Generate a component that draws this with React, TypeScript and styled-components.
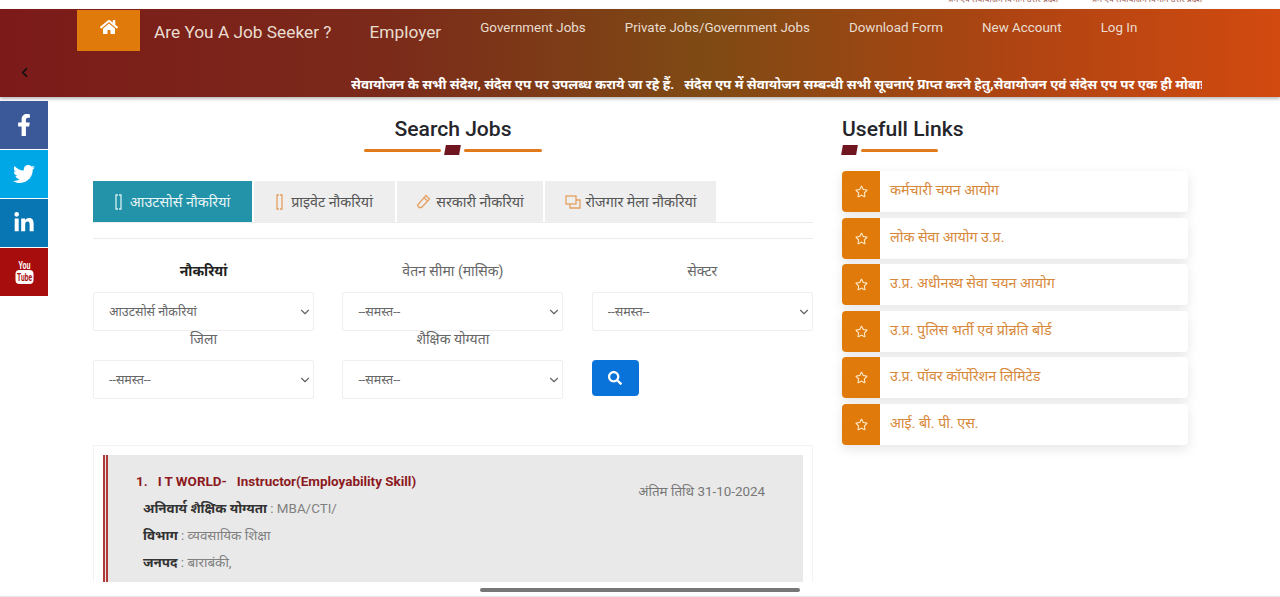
import styled, { createGlobalStyle } from 'styled-components'
import { FaHome, FaFacebookF, FaTwitter, FaLinkedinIn, FaSearch, FaRegStar, FaChevronLeft } from 'react-icons/fa'
import { ChevronDown } from 'lucide-react'

const FONT = `Roboto, "Noto Sans", "Noto Sans Devanagari", "Liberation Sans", sans-serif`

const Global = createGlobalStyle`
  html, body {
    margin: 0;
    height: 597px;
    overflow: hidden;
    background: #fff;
    font-family: ${FONT};
  }
  * { box-sizing: border-box; }
`

const Page = styled.div`
  position: relative;
  height: 597px;
  overflow: hidden;
  border-bottom: 1px solid #e6e6e6;
`

const TopStrip = styled.div`
  height: 9px;
  overflow: hidden;
  display: flex;
  justify-content: flex-end;
  gap: 33px;
  padding-right: 78px;
  font-size: 8.5px;
  line-height: 4px;
  color: #9a5a50;
  span { margin-top: -3px; }
`

const Header = styled.header`
  height: 88px;
  padding-top: 1px;
  background: linear-gradient(90deg, #7c1a1a 0%, #7b2a1a 30%, #7f4a14 55%, #b04412 80%, #d24a10 100%);
  box-shadow: 0 2px 3px rgba(120, 120, 120, 0.5);
`

const Nav = styled.nav`
  display: flex;
  align-items: flex-start;
  padding-left: 77px;
  height: 41px;
  color: #e9ddd0;
`

const HomeTile = styled.a`
  width: 63px;
  height: 41px;
  background: #e07a0b;
  color: #fff;
  display: flex;
  justify-content: center;
  padding-top: 8px;
  font-size: 18px;
`

const BigLink = styled.a<{ $gap: number }>`
  font-size: 17.3px;
  line-height: 24px;
  margin: 10px 0 0 ${p => p.$gap}px;
  white-space: nowrap;
`

const SmallLink = styled.a<{ $gap: number }>`
  font-size: 13.4px;
  line-height: 20px;
  margin: 8px 0 0 ${p => p.$gap}px;
  white-space: nowrap;
`

const TickerRow = styled.div`
  display: flex;
  align-items: center;
  height: 46px;
  padding: 0 78px 0 19px;
`

const Back = styled.span`
  color: #111;
  font-size: 11px;
  display: flex;
  width: 332px;
  flex: none;
  margin-top: -4px;
`

const Ticker = styled.div`
  flex: 1;
  overflow: hidden;
  white-space: pre;
  color: #fff;
  font-size: 13.45px;
  font-weight: 700;
  margin-top: 22px;
  line-height: 20px;
`

const Body = styled.div`
  display: flex;
  align-items: flex-start;
  padding-top: 3px;
`

const Social = styled.aside`
  width: 48px;
  flex: none;
  display: flex;
  flex-direction: column;
  gap: 1px;
  margin-top: 1px;
`

const SocialTile = styled.a<{ $bg: string }>`
  height: 48px;
  background: ${p => p.$bg};
  color: #fff;
  display: flex;
  align-items: center;
  justify-content: center;
  font-size: 22px;
`

const Main = styled.main`
  width: 720px;
  flex: none;
  margin-left: 45px;
  height: 482px;
  overflow: hidden;
`

const Heading = styled.h2<{ $center?: boolean }>`
  margin: 15px 0 0;
  font-size: 21.1px;
  line-height: 28px;
  font-weight: 500;
  color: #25252b;
  text-align: ${p => (p.$center ? 'center' : 'left')};
`

const Divider = styled.div<{ $center?: boolean }>`
  display: flex;
  align-items: center;
  gap: 4px;
  height: 10px;
  margin-top: 2px;
  justify-content: ${p => (p.$center ? 'center' : 'flex-start')};
`

const Rule = styled.i<{ $w: number }>`
  display: block;
  width: ${p => p.$w}px;
  height: 3px;
  background: #e07a1a;
  border-radius: 2px;
`

const Block = styled.i`
  display: block;
  width: 15px;
  height: 10px;
  background: #701620;
  transform: skewX(-10deg);
`

const Tabs = styled.div`
  display: flex;
  gap: 2px;
  margin-top: 26px;
  height: 42px;
  border-bottom: 1px solid #ececec;
`

const Tab = styled.a<{ $w: number; $gap?: number; $active?: boolean }>`
  width: ${p => p.$w}px;
  height: 41px;
  background: ${p => (p.$active ? '#2393a9' : '#eeeeee')};
  color: ${p => (p.$active ? '#e8f4f6' : '#555')};
  display: flex;
  align-items: center;
  justify-content: center;
  gap: ${p => p.$gap ?? 5}px;
  font-size: 14.3px;
  svg { flex: none; }
`

const FormArea = styled.div`
  margin-top: 15px;
  border-top: 1px solid #ececec;
  display: grid;
  grid-template-columns: repeat(3, 221px);
  column-gap: 28.4px;
  padding-top: 24px;
`

const Field = styled.div`
  display: flex;
  flex-direction: column;
  align-items: stretch;
`

const FieldLabel = styled.label<{ $strong?: boolean }>`
  text-align: center;
  font-size: 14px;
  line-height: 16px;
  height: 29px;
  color: ${p => (p.$strong ? '#222' : '#666')};
  font-weight: ${p => (p.$strong ? 700 : 400)};
`

const SelectWrap = styled.div`
  position: relative;
  height: 39px;
  svg {
    position: absolute;
    right: 2px;
    top: 13px;
    color: #666;
    pointer-events: none;
  }
`

const Select = styled.select`
  appearance: none;
  width: 100%;
  height: 39px;
  padding: 0 15px;
  border: 1px solid #efefef;
  border-radius: 2px;
  background: #fff;
  color: #666;
  font-family: ${FONT};
  font-size: 12.5px;
`

const SearchButton = styled.button`
  width: 47px;
  height: 36px;
  margin-top: 29px;
  border: 0;
  border-radius: 4px;
  background: #0a73d9;
  color: #fff;
  font-size: 14px;
  display: flex;
  align-items: center;
  justify-content: center;
`

const JobPanel = styled.section`
  margin-top: 46px;
  padding: 9px;
  border: 1px solid #f3f3f3;
  height: 200px;
`

const JobCard = styled.article`
  display: flex;
  justify-content: space-between;
  height: 190px;
  padding: 17px 38px 0 28px;
  background: #e9e9e9;
  border-left: 5px double #b03a3a;
`

const JobInfo = styled.div`
  color: #808080;
  font-size: 13.4px;
`

const JobTitle = styled.h3`
  margin: 0 0 7px;
  font-size: 13.45px;
  line-height: 20px;
  font-weight: 700;
  color: #8c1a1f;
  white-space: pre;
`

const JobLine = styled.p`
  margin: 0 0 7px 7px;
  line-height: 20px;
  b { color: #333; }
`

const DateColumn = styled.div`
  display: flex;
  flex-direction: column;
  align-items: flex-end;
  margin-top: 10px;
  font-size: 13.4px;
  line-height: 20px;
  color: #777;
`

const DetailLink = styled.a`
  margin-top: 78px;
`

const Side = styled.aside`
  width: 346px;
  flex: none;
  margin-left: 29px;
`

const LinkList = styled.div`
  margin-top: 16px;
  display: flex;
  flex-direction: column;
  gap: 5.6px;
`

const LinkRow = styled.a`
  display: flex;
  align-items: stretch;
  height: 41px;
  background: #fff;
  border-radius: 4px;
  box-shadow: 0 4px 12px rgba(0, 0, 0, 0.1);
  overflow: hidden;
  color: #d8883a;
  font-size: 14.3px;
`

const StarTile = styled.span`
  width: 38px;
  flex: none;
  background: #e07a0b;
  color: #ffe9c9;
  display: flex;
  align-items: center;
  justify-content: center;
  font-size: 13px;
  margin-right: 10px;
`

const LinkText = styled.span`
  line-height: 38px;
`

const ScrollThumb = styled.div`
  position: absolute;
  left: 480px;
  top: 588px;
  width: 320px;
  height: 4px;
  border-radius: 2px;
  background: #777;
`

const Bracket = ({ color }: { color: string }) => (
  <svg width="7" height="16" viewBox="0 0 7 16" fill="none" stroke={color} strokeWidth="1.3">
    <path d="M3 1H1v14h2M4 1h2v14H4" />
  </svg>
)

const Eraser = () => (
  <svg width="15" height="15" viewBox="0 0 15 15" fill="none" stroke="#e5a060" strokeWidth="1.3">
    <path d="M10 1.5l3.5 3.5-8 8.5H3L1.5 11z" />
    <path d="M8 3.5l3.5 3.5" />
  </svg>
)

const Clone = () => (
  <svg width="16" height="14" viewBox="0 0 16 14" fill="none" stroke="#e5a060" strokeWidth="1.3">
    <rect x="1" y="1" width="10" height="8" />
    <path d="M11 5h4v8H5V9" />
  </svg>
)

const YouTube = () => (
  <svg width="19" height="24" viewBox="0 0 19 24" fill="#fff" fontFamily="Roboto, sans-serif" fontWeight="700">
    <text x="9.5" y="9" textAnchor="middle" fontSize="10" textLength="12" lengthAdjust="spacingAndGlyphs">You</text>
    <rect x="0.5" y="10" width="18" height="14" rx="4" />
    <text x="9.5" y="21" textAnchor="middle" fontSize="10" fill="#a80d0d" textLength="15" lengthAdjust="spacingAndGlyphs">Tube</text>
  </svg>
)

const links = [
  'कर्मचारी चयन आयोग',
  'लोक सेवा आयोग उ.प्र.',
  'उ.प्र. अधीनस्थ सेवा चयन आयोग',
  'उ.प्र. पुलिस भर्ती एवं प्रोन्नति बोर्ड',
  'उ.प्र. पॉवर कॉर्पोरेशन लिमिटेड',
  'आई. बी. पी. एस.',
]

const fields = [
  { label: 'नौकरियां', value: 'आउटसोर्स नौकरियां', strong: true },
  { label: 'वेतन सीमा (मासिक)', value: '--समस्त--' },
  { label: 'सेक्टर', value: '--समस्त--' },
  { label: 'जिला', value: '--समस्त--' },
  { label: 'शैक्षिक योग्यता', value: '--समस्त--' },
]

export default function App() {
  return (
    <Page>
      <Global />
      <TopStrip>
        <span>श्रम एवं सेवायोजन विभाग उत्तर प्रदेश</span>
        <span>श्रम एवं सेवायोजन विभाग उत्तर प्रदेश</span>
      </TopStrip>
      <Header>
        <Nav>
          <HomeTile><FaHome /></HomeTile>
          <BigLink $gap={14}>Are You A Job Seeker ?</BigLink>
          <BigLink $gap={38}>Employer</BigLink>
          <SmallLink $gap={39}>Government Jobs</SmallLink>
          <SmallLink $gap={39}>Private Jobs/Government Jobs</SmallLink>
          <SmallLink $gap={39}>Download Form</SmallLink>
          <SmallLink $gap={39}>New Account</SmallLink>
          <SmallLink $gap={39}>Log In</SmallLink>
        </Nav>
        <TickerRow>
          <Back><FaChevronLeft /></Back>
          <Ticker>{'सेवायोजन के सभी संदेश, संदेस एप पर उपलब्ध कराये जा रहे हैं.   संदेस एप में सेवायोजन सम्बन्धी सभी सूचनाएं प्राप्त करने हेतु,सेवायोजन एवं संदेस एप पर एक ही मोबाइल नंबर'}</Ticker>
        </TickerRow>
      </Header>
      <Body>
        <Social>
          <SocialTile $bg="#3b5998"><FaFacebookF /></SocialTile>
          <SocialTile $bg="#00a7e6"><FaTwitter /></SocialTile>
          <SocialTile $bg="#0976b4"><FaLinkedinIn /></SocialTile>
          <SocialTile $bg="#a80d0d"><YouTube /></SocialTile>
        </Social>
        <Main>
          <Heading $center>Search Jobs</Heading>
          <Divider $center>
            <Rule $w={77} />
            <Block />
            <Rule $w={78} />
          </Divider>
          <Tabs>
            <Tab $w={159} $gap={8} $active><Bracket color="#d6eef2" /> आउटसोर्स नौकरियां</Tab>
            <Tab $w={141} $gap={8}><Bracket color="#e5a060" /> प्राइवेट नौकरियां</Tab>
            <Tab $w={146}><Eraser /> सरकारी नौकरियां</Tab>
            <Tab $w={171}><Clone /> रोजगार मेला नौकरियां</Tab>
          </Tabs>
          <FormArea>
            {fields.map(f => (
              <Field key={f.label}>
                <FieldLabel $strong={f.strong}>{f.label}</FieldLabel>
                <SelectWrap>
                  <Select defaultValue={f.value}>
                    <option>{f.value}</option>
                  </Select>
                  <ChevronDown size={14} />
                </SelectWrap>
              </Field>
            ))}
            <SearchButton aria-label="search"><FaSearch /></SearchButton>
          </FormArea>
          <JobPanel>
            <JobCard>
              <JobInfo>
                <JobTitle>{'1.   I T WORLD-   Instructor(Employability Skill)'}</JobTitle>
                <JobLine><b>अनिवार्य शैक्षिक योग्यता</b> : MBA/CTI/</JobLine>
                <JobLine><b>विभाग</b> : व्यवसायिक शिक्षा</JobLine>
                <JobLine><b>जनपद</b> : बाराबंकी,</JobLine>
              </JobInfo>
              <DateColumn>
                अंतिम तिथि 31-10-2024
                <DetailLink>विवरण</DetailLink>
              </DateColumn>
            </JobCard>
          </JobPanel>
        </Main>
        <Side>
          <Heading>Usefull Links</Heading>
          <Divider>
            <Block />
            <Rule $w={77} />
          </Divider>
          <LinkList>
            {links.map(l => (
              <LinkRow key={l}>
                <StarTile><FaRegStar /></StarTile>
                <LinkText>{l}</LinkText>
              </LinkRow>
            ))}
          </LinkList>
        </Side>
      </Body>
      <ScrollThumb />
    </Page>
  )
}
